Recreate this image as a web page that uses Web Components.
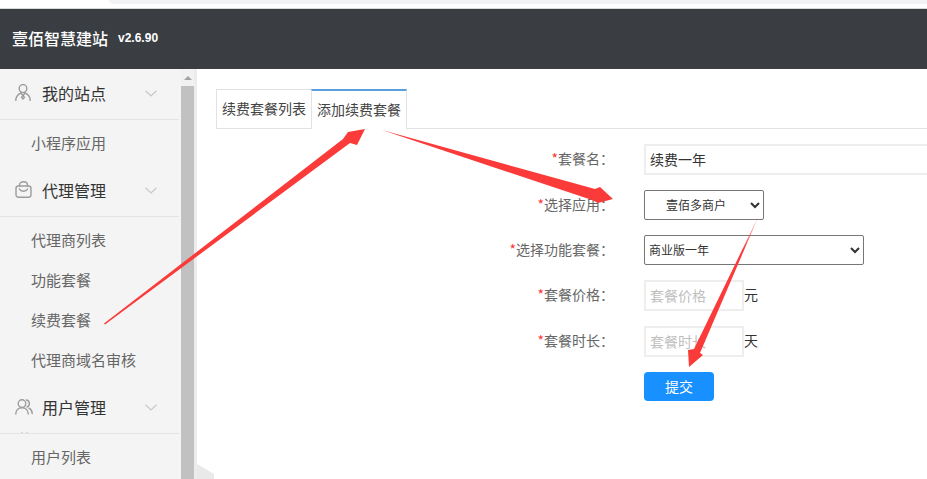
<!DOCTYPE html>
<html lang="zh">
<head>
<meta charset="utf-8">
<title>续费套餐</title>
<style>
  html, body { margin: 0; height: 100%; overflow: hidden; background: #fff; }
  body { font-family: "Noto Sans CJK SC", "Liberation Sans", sans-serif; font-size: 14px; }
</style>
</head>
<body>
<yb-app></yb-app>

<script>
const ICONS = {
  person: `<svg width="16" height="17" viewBox="0 0 16 17" fill="none" stroke="#9c9c9c" stroke-width="1.4" stroke-linecap="round">
    <ellipse cx="8" cy="4.600" rx="3.800" ry="4"/>
    <path d="M.8 16.500c0-4 2.400-6.200 5-7.300M15.200 16.500c0-4-2.400-6.200-5-7.300"/>
    <path d="M5.800 9.200L8 11.200l2.200-2M8 11.200l-1.400 2.200L8 15l1.400-1.600z"/></svg>`,
  bag: `<svg width="17" height="17" viewBox="0 0 17 17" fill="none" stroke="#9c9c9c" stroke-width="1.4" stroke-linecap="round">
    <rect x="1" y="5" width="15" height="11.200" rx="2.400"/>
    <path d="M4.600 5V3.800C4.600 2 6.200.8 8.500.8s3.900 1.200 3.900 3V5"/>
    <path d="M4.400 8c.8 1.600 2.200 2.200 4.100 2.200s3.300-.6 4.100-2.200"/></svg>`,
  users: `<svg width="18" height="16" viewBox="0 0 18 16" fill="none" stroke="#9c9c9c" stroke-width="1.400" stroke-linecap="round">
    <circle cx="7" cy="4.600" r="3.800"/>
    <path d="M.8 15c0-3.800 2.600-6.200 6.200-6.200s6.200 2.400 6.200 6.200"/>
    <path d="M11.400 1c1.800.4 3 1.800 3 3.600 0 1.600-1 3-2.500 3.500M14 9.200c1.900 1 3.200 3 3.200 5.400"/></svg>`
};

class YbTopStrip extends HTMLElement {
  constructor() {
    super();
    this.attachShadow({ mode: 'open' }).innerHTML = `
      <style>
        :host { display: block; height: 8px; background: #fff; border-bottom: 1px solid #d9d9d9; }
        .tab { margin-left: 109px; height: 4px; background: #f1f3f4; border-bottom-left-radius: 9px; }
      </style>
      <div class="tab"></div>`;
  }
}

class YbHeader extends HTMLElement {
  constructor() {
    super();
    this.attachShadow({ mode: 'open' }).innerHTML = `
      <style>
        :host { display: flex; align-items: center; box-sizing: border-box; height: 60px; padding: 0 0 2px 12px; background: #3a3e43; color: #fff; }
        .name { font-size: 16px; font-weight: 500; }
        .ver { margin-left: 10px; font: bold 12px "Liberation Sans", sans-serif; }
      </style>
      <span class="name"><slot name="name"></slot></span>
      <span class="ver"><slot name="version"></slot></span>`;
  }
}

class YbMenuGroup extends HTMLElement {
  constructor() {
    super();
    this.attachShadow({ mode: 'open' }).innerHTML = `
      <style>
        :host { display: block; }
        .head { display: flex; align-items: center; box-sizing: border-box; height: 51px; padding: 0 0 3px 15px; border-bottom: 1px solid #e3e3e3; font-size: 16px; color: #333; }
        .icon { display: flex; width: 27px; }
        svg.chev { margin: 2px 22px 0 auto; }
        .items { padding: 3px 0; }
      </style>
      <div class="head">
        <span class="icon">${ICONS[this.getAttribute('icon')] || ''}</span>
        <span>${this.getAttribute('label')}</span>
        <svg class="chev" width="12" height="7" viewBox="0 0 12 7" fill="none" stroke="#c8c8c8" stroke-width="1.200"><path d="M.5.700L6 6l5.500-5.300"/></svg>
      </div>
      <div class="items"><slot></slot></div>`;
  }
}

class YbMenuItem extends HTMLElement {
  constructor() {
    super();
    this.attachShadow({ mode: 'open' }).innerHTML = `
      <style>
        :host { display: flex; align-items: center; box-sizing: border-box; height: 40px; padding: 0 0 2px 31px; font-size: 15px; color: #666; }
      </style>
      <slot></slot>`;
  }
}

class YbSidebar extends HTMLElement {
  constructor() {
    super();
    this.attachShadow({ mode: 'open' }).innerHTML = `
      <style>
        :host { display: grid; grid-template-columns: 179px 2px 13px 3px; width: 197px; height: 100%; overflow: hidden; background: #f4f4f4; }
        .menu { overflow: hidden; }
        .bar { grid-column: 3; display: flex; flex-direction: column; background: #f1f1f1; }
        .up { height: 17px; display: flex; align-items: center; justify-content: center; }
        .up i { border: 4px solid transparent; border-top: 0; border-bottom-color: #a3a3a3; }
        .thumb { flex: 1; background: #c1c1c1; }
        .edge { grid-column: 4; background: #ececec; }
      </style>
      <div class="menu"><slot></slot></div>
      <div class="bar"><div class="up"><i></i></div><div class="thumb"></div></div>
      <div class="edge"></div>`;
  }
}

class YbTabs extends HTMLElement {
  constructor() {
    super();
    this.attachShadow({ mode: 'open' }).innerHTML = `
      <style>
        :host { display: flex; height: 40px; box-shadow: inset 0 -1px 0 #e2e2e2; font-size: 14px; color: #444; }
      </style>
      <slot></slot>`;
  }
}

class YbTab extends HTMLElement {
  constructor() {
    super();
    this.attachShadow({ mode: 'open' }).innerHTML = `
      <style>
        :host { display: flex; align-items: center; box-sizing: border-box; height: 40px; padding: 0 5px 2px; border: 1px solid #e2e2e2; border-right: 0; background: #fff; }
        :host([active]) { border: 1px solid #e2e2e2; border-top: 2px solid #5b9ede; border-bottom: 0; }
      </style>
      <slot></slot>`;
  }
}

class YbField extends HTMLElement {
  constructor() {
    super();
    const label = this.getAttribute('label');
    this.attachShadow({ mode: 'open' }).innerHTML = `
      <style>
        :host { display: grid; grid-template-columns: 398px 1fr; column-gap: 30px; align-items: center; font-size: 14px; }
        .label { padding-bottom: 3px; text-align: right; color: #666; }
        .label b { font-weight: 400; color: #f33; }
        .label i { font-style: normal; font-family: "Noto Sans CJK TC", sans-serif; }
        .ctl { display: flex; align-items: center; min-width: 0; color: #333; }
      </style>
      <div class="label">${label ? `<b>*</b>${label}<i>：</i>` : ''}</div>
      <div class="ctl"><slot></slot></div>`;
  }
}

class YbInput extends HTMLElement {
  constructor() {
    super();
    const value = this.getAttribute('value') || '';
    const hint = this.getAttribute('placeholder') || '';
    this.attachShadow({ mode: 'open' }).innerHTML = `
      <style>
        :host { display: block; width: var(--w, 100px); flex: none; }
        input { display: block; box-sizing: border-box; width: 100%; height: 31px; padding: 0 4px 2px; border: 2px solid #eee; outline: 0; background: #fff; color: #333; font: 14px "Noto Sans CJK SC", sans-serif; }
        input::placeholder { color: #bfbfbf; }
      </style>
      <input type="text" value="${value}" placeholder="${hint}">`;
  }
}

class YbSelect extends HTMLElement {
  constructor() {
    super();
    const center = this.hasAttribute('center');
    this.attachShadow({ mode: 'open' }).innerHTML = `
      <style>
        :host { display: block; width: var(--w, 120px); }
        select { display: block; box-sizing: border-box; width: 100%; height: 30px; padding: 0 ${center ? '4px' : '0'} 2px 0; background: #fff; color: #333; border: 1px solid #767676; border-radius: 2px; outline: 0; font: 12px "Noto Sans CJK SC", sans-serif; text-align: ${center ? 'center' : 'left'}; }
      </style>
      <select><option>${this.getAttribute('value')}</option></select>`;
  }
}

class YbButton extends HTMLElement {
  constructor() {
    super();
    this.attachShadow({ mode: 'open' }).innerHTML = `
      <style>
        :host { display: flex; align-items: center; justify-content: center; box-sizing: border-box; width: 70px; height: 29px; padding-bottom: 2px; background: #1890ff; border-radius: 4px; color: #fff; font-size: 14px; }
      </style>
      <slot></slot>`;
  }
}

class YbArrows extends HTMLElement {
  constructor() {
    super();
    this.attachShadow({ mode: 'open' }).innerHTML = `
      <style>
        :host { position: absolute; inset: 0; display: block; pointer-events: none; }
        svg { display: block; }
      </style>
      <svg width="927" height="479" viewBox="0 0 927 479">
        <defs>
          <linearGradient id="fade" gradientUnits="userSpaceOnUse" x1="760" y1="213" x2="744" y2="250">
            <stop offset="0" stop-color="#fb3a3a" stop-opacity=".1"/>
            <stop offset="1" stop-color="#fb3a3a"/>
          </linearGradient>
        </defs>
        <polygon points="197,464 214,474 214,479 197,479" fill="#e9e9e9"/>
        <path d="M21 432.500h2M26 432.500h2" stroke="#d6d6d6"/>
        <polygon fill="#fb3a3a" points="104,323.500 343,139 348,132 365,129 357,145 350,143 105,324.500"/>
        <polygon fill="#fb3a3a" points="382,130 595,189 600,187 613,199 598,203 592,200"/>
        <polygon fill="url(#fade)" points="760,213 700,353 703,355 689,367 688,350 694,349"/>
      </svg>`;
  }
}

class YbApp extends HTMLElement {
  constructor() {
    super();
    this.attachShadow({ mode: 'open' }).innerHTML = `
      <style>
        :host { display: flex; flex-direction: column; position: relative; height: 479px; overflow: hidden; }
        .body { flex: 1; display: flex; min-height: 0; }
        .main { flex: 1; min-width: 0; padding: 20px 0 0 19px; }
        .form { display: flex; flex-direction: column; gap: 15px; margin-top: 15px; }
        .wide { --w: 300px; }
        .unit { flex: none; padding-bottom: 4px; }
      </style>
      <yb-top-strip></yb-top-strip>
      <yb-header>
        <span slot="name">壹佰智慧建站</span>
        <span slot="version">v2.6.90</span>
      </yb-header>
      <div class="body">
        <yb-sidebar>
          <yb-menu-group icon="person" label="我的站点">
            <yb-menu-item>小程序应用</yb-menu-item>
          </yb-menu-group>
          <yb-menu-group icon="bag" label="代理管理">
            <yb-menu-item>代理商列表</yb-menu-item>
            <yb-menu-item>功能套餐</yb-menu-item>
            <yb-menu-item>续费套餐</yb-menu-item>
            <yb-menu-item>代理商域名审核</yb-menu-item>
          </yb-menu-group>
          <yb-menu-group icon="users" label="用户管理">
            <yb-menu-item>用户列表</yb-menu-item>
          </yb-menu-group>
        </yb-sidebar>
        <div class="main">
          <yb-tabs>
            <yb-tab>续费套餐列表</yb-tab>
            <yb-tab active>添加续费套餐</yb-tab>
          </yb-tabs>
          <div class="form">
            <yb-field label="套餐名"><yb-input class="wide" value="续费一年"></yb-input></yb-field>
            <yb-field label="选择应用"><yb-select center value="壹佰多商户" style="--w:120px"></yb-select></yb-field>
            <yb-field label="选择功能套餐"><yb-select value="商业版一年" style="--w:220px"></yb-select></yb-field>
            <yb-field label="套餐价格"><yb-input placeholder="套餐价格"></yb-input><span class="unit">元</span></yb-field>
            <yb-field label="套餐时长"><yb-input placeholder="套餐时长"></yb-input><span class="unit">天</span></yb-field>
            <yb-field><yb-button>提交</yb-button></yb-field>
          </div>
        </div>
      </div>
      <yb-arrows></yb-arrows>`;
  }
}

customElements.define('yb-top-strip', YbTopStrip);
customElements.define('yb-header', YbHeader);
customElements.define('yb-menu-group', YbMenuGroup);
customElements.define('yb-menu-item', YbMenuItem);
customElements.define('yb-sidebar', YbSidebar);
customElements.define('yb-tabs', YbTabs);
customElements.define('yb-tab', YbTab);
customElements.define('yb-field', YbField);
customElements.define('yb-input', YbInput);
customElements.define('yb-select', YbSelect);
customElements.define('yb-button', YbButton);
customElements.define('yb-arrows', YbArrows);
customElements.define('yb-app', YbApp);
</script>
</body>
</html>
